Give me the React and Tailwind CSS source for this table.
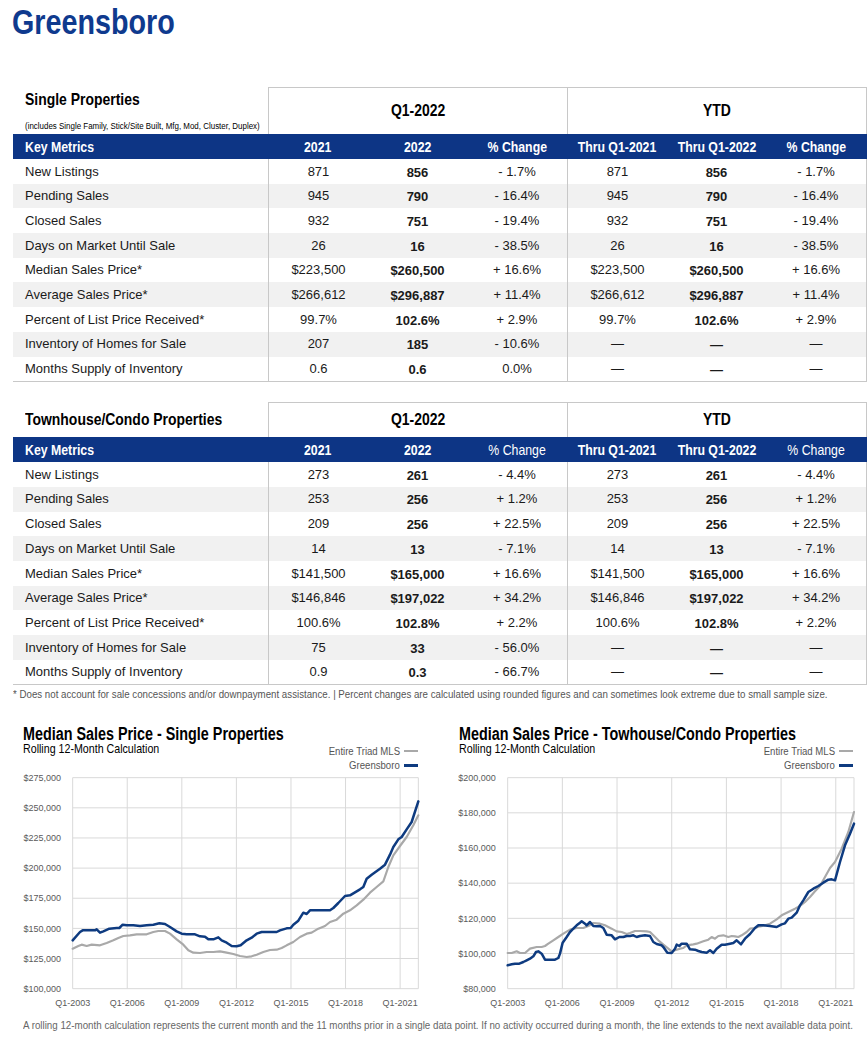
import React from 'react';

const SANS = "font-['Liberation_Sans',Arial,sans-serif]";

// condensed look: Liberation Sans squeezed horizontally
function Nar({ children, origin = 'origin-left', className = '' }) {
  return (
    <span className={`inline-block whitespace-nowrap scale-x-[0.82] ${origin} ${className}`}>{children}</span>
  );
}

const singleRows = [
  ['New Listings', '871', '856', '- 1.7%', '871', '856', '- 1.7%'],
  ['Pending Sales', '945', '790', '- 16.4%', '945', '790', '- 16.4%'],
  ['Closed Sales', '932', '751', '- 19.4%', '932', '751', '- 19.4%'],
  ['Days on Market Until Sale', '26', '16', '- 38.5%', '26', '16', '- 38.5%'],
  ['Median Sales Price*', '$223,500', '$260,500', '+ 16.6%', '$223,500', '$260,500', '+ 16.6%'],
  ['Average Sales Price*', '$266,612', '$296,887', '+ 11.4%', '$266,612', '$296,887', '+ 11.4%'],
  ['Percent of List Price Received*', '99.7%', '102.6%', '+ 2.9%', '99.7%', '102.6%', '+ 2.9%'],
  ['Inventory of Homes for Sale', '207', '185', '- 10.6%', '—', '—', '—'],
  ['Months Supply of Inventory', '0.6', '0.6', '0.0%', '—', '—', '—'],
];

const townRows = [
  ['New Listings', '273', '261', '- 4.4%', '273', '261', '- 4.4%'],
  ['Pending Sales', '253', '256', '+ 1.2%', '253', '256', '+ 1.2%'],
  ['Closed Sales', '209', '256', '+ 22.5%', '209', '256', '+ 22.5%'],
  ['Days on Market Until Sale', '14', '13', '- 7.1%', '14', '13', '- 7.1%'],
  ['Median Sales Price*', '$141,500', '$165,000', '+ 16.6%', '$141,500', '$165,000', '+ 16.6%'],
  ['Average Sales Price*', '$146,846', '$197,022', '+ 34.2%', '$146,846', '$197,022', '+ 34.2%'],
  ['Percent of List Price Received*', '100.6%', '102.8%', '+ 2.2%', '100.6%', '102.8%', '+ 2.2%'],
  ['Inventory of Homes for Sale', '75', '33', '- 56.0%', '—', '—', '—'],
  ['Months Supply of Inventory', '0.9', '0.3', '- 66.7%', '—', '—', '—'],
];

const COLS = 'grid grid-cols-[255px_100px_99px_100px_100px_99px_101px]';

function MetricsTable({ title, subtitle, topClass, rows, lightChange }) {
  const changeWeight = lightChange ? 'font-normal' : 'font-bold';
  return (
    <div className={`ml-[13px] w-[854px] ${SANS}`}>
      {/* group heading row */}
      <div className={`grid grid-cols-[255px_299px_300px] ${topClass}`}>
        <div className={`pl-[12px] flex flex-col ${subtitle ? 'justify-between pt-[3px] pb-[3px]' : 'justify-center'}`}>
          <div className="font-bold text-[17px] leading-[20px] text-black">
            <Nar>{title}</Nar>
          </div>
          {subtitle && (
            <div className="text-[9.7px] leading-[10px] text-black">
              <Nar>{subtitle}</Nar>
            </div>
          )}
        </div>
        <div className="border-l border-t border-[#c8c8c8] flex items-center justify-center font-bold text-[17px] text-black">
          <Nar origin="origin-center">Q1-2022</Nar>
        </div>
        <div className="border-l border-t border-r border-[#c8c8c8] flex items-center justify-center font-bold text-[17px] text-black">
          <Nar origin="origin-center">YTD</Nar>
        </div>
      </div>

      {/* blue header */}
      <div className={`${COLS} h-[25px] bg-[#0d3585] text-white text-[15px] leading-[18px] items-center`}>
        <div className="pl-[12px] font-bold"><Nar>Key Metrics</Nar></div>
        <div className="text-center font-bold"><Nar origin="origin-center">2021</Nar></div>
        <div className="text-center font-bold"><Nar origin="origin-center">2022</Nar></div>
        <div className={`text-center ${changeWeight}`}><Nar origin="origin-center">% Change</Nar></div>
        <div className="text-center font-bold"><Nar origin="origin-center">Thru Q1-2021</Nar></div>
        <div className="text-center font-bold"><Nar origin="origin-center">Thru Q1-2022</Nar></div>
        <div className={`text-center ${changeWeight}`}><Nar origin="origin-center">% Change</Nar></div>
      </div>

      {/* body */}
      <div className="border-b border-[#c8c8c8] text-[13px] text-[#1a1a1a]">
        {rows.map((r, i) => (
          <div key={i} className={`${COLS} h-[24.7px] items-stretch ${i % 2 === 1 ? 'bg-[#f1f1f1]' : 'bg-white'}`}>
            <div className="pl-[12px] flex items-center">{r[0]}</div>
            <div className="border-l border-[#c8c8c8] flex items-center justify-center">{r[1]}</div>
            <div className="flex items-center justify-center font-bold pt-[2px]">{r[2]}</div>
            <div className="flex items-center justify-center">{r[3]}</div>
            <div className="border-l border-[#c8c8c8] flex items-center justify-center">{r[4]}</div>
            <div className="flex items-center justify-center font-bold pt-[2px]">{r[5]}</div>
            <div className="border-r border-[#c8c8c8] flex items-center justify-center">{r[6]}</div>
          </div>
        ))}
      </div>
    </div>
  );
}

// traced lines, in 3x crop coordinates (see transform)
const singleGray =
  '218,380 235,372 245,368 260,372 275,368 300,370 320,363 340,355 355,348 370,342 390,340 410,337 440,337 460,330 475,327 495,327 510,335 530,352 550,368 565,385 580,392 600,393 620,390 640,390 660,388 680,392 700,396 720,402 740,405 755,403 770,398 790,390 810,384 830,383 845,378 860,370 880,360 900,345 920,335 935,332 955,320 975,312 990,300 1010,293 1030,275 1050,265 1070,250 1090,233 1110,212 1130,195 1150,178 1165,135 1180,100 1200,72 1220,45 1240,10 1255,-20';
const singleBlue =
  '218,355 240,330 248,325 285,325 290,322 300,332 310,328 328,320 350,318 358,318 368,308 380,310 400,310 420,312 440,310 460,308 478,304 495,306 510,315 530,328 545,335 560,337 585,337 600,343 615,344 625,352 640,352 655,346 665,355 680,362 695,372 710,373 722,370 740,355 755,347 770,335 785,330 800,330 830,330 840,325 860,319 872,318 880,308 895,296 910,272 920,276 930,265 990,265 1000,258 1015,243 1035,222 1050,220 1080,202 1090,195 1100,170 1115,158 1140,140 1155,128 1170,98 1180,75 1195,52 1205,45 1220,22 1235,0 1255,-62';
const townGray =
  '233,393 245,393 260,388 270,393 285,393 300,380 320,375 335,375 345,372 355,365 370,355 385,345 400,335 420,323 440,318 460,318 475,312 490,303 510,305 525,310 545,320 560,328 575,330 590,336 600,333 615,327 630,327 650,328 660,330 670,340 685,355 700,368 715,380 725,388 735,385 750,380 760,378 770,370 790,367 800,365 820,358 835,353 845,345 855,350 865,342 880,340 895,345 905,342 915,343 925,345 935,340 950,330 960,320 975,318 990,313 1005,310 1020,305 1040,292 1055,280 1075,270 1095,260 1110,252 1125,240 1140,225 1155,208 1170,192 1185,165 1200,138 1215,120 1235,80 1255,30 1272,-30';
const townBlue =
  '233,430 245,427 255,425 268,425 280,420 290,415 300,410 310,403 318,390 325,388 335,395 345,413 360,413 375,413 385,408 390,395 398,362 410,345 420,330 430,320 440,310 450,302 455,298 465,305 470,310 480,300 490,312 500,313 510,312 520,318 530,338 545,340 555,352 568,345 580,345 590,342 600,342 610,340 620,345 630,342 645,340 660,342 670,360 680,366 695,370 700,375 712,392 725,393 735,380 740,368 748,372 755,365 770,365 780,382 795,383 805,387 815,390 830,392 840,385 850,393 860,380 875,368 885,368 900,365 910,363 920,355 933,367 945,350 960,336 975,318 985,310 1000,310 1020,312 1040,315 1055,307 1065,304 1075,290 1085,287 1100,272 1110,250 1120,235 1135,210 1150,200 1165,192 1180,182 1195,173 1205,172 1215,175 1230,120 1245,70 1260,35 1272,5';

const XLABELS = ['Q1-2003', 'Q1-2006', 'Q1-2009', 'Q1-2012', 'Q1-2015', 'Q1-2018', 'Q1-2021'];
const AXIS_FONT = 'Liberation Sans, Arial, sans-serif';

function Chart({ left, right, yLabels, labelX, offsetX, gray, blue }) {
  const top = 5.67;
  const bottom = 216.67;
  const step = (bottom - top) / (yLabels.length - 1);
  const xStep = ((right - left) / 19) * 3;
  return (
    <svg width="433" height="242" className="block">
      {yLabels.map((l, i) => (
        <g key={l}>
          <line x1={left} x2={right} y1={top + i * step} y2={top + i * step} stroke="#d9d9d9" strokeWidth="1" />
          <text x={labelX} y={top + i * step + 3.2} textAnchor="end" fontSize="9" fill="#5a5a5a" fontFamily={AXIS_FONT}>{l}</text>
        </g>
      ))}
      {XLABELS.map((l, i) => (
        <g key={l}>
          <line x1={left + i * xStep} x2={left + i * xStep} y1={top} y2={bottom} stroke="#d9d9d9" strokeWidth="1" />
          <text x={left + i * xStep} y={234} textAnchor="middle" fontSize="9" fill="#5a5a5a" fontFamily={AXIS_FONT}>{l}</text>
        </g>
      ))}
      <line x1={right} x2={right} y1={top} y2={bottom} stroke="#d9d9d9" strokeWidth="1" />
      <g transform={`translate(${offsetX} 50) scale(0.33333)`}>
        <polyline points={gray} fill="none" stroke="#a9a9a9" strokeWidth="6.5" strokeLinejoin="round" strokeLinecap="round" />
        <polyline points={blue} fill="none" stroke="#0e3b80" strokeWidth="7.5" strokeLinejoin="round" strokeLinecap="round" />
      </g>
    </svg>
  );
}

function ChartBlock({ title, padL, padR, children }) {
  return (
    <div className={`w-[433px] ${padL} ${SANS}`}>
      <div className="font-bold text-[17.5px] leading-[18px] text-black">
        <Nar>{title}</Nar>
      </div>
      <div className={`flex justify-between items-start ${padR}`}>
        <div className="text-[13px] leading-[12px] text-black">
          <Nar>Rolling 12-Month Calculation</Nar>
        </div>
        <div className="mt-[1px] text-[11.7px] leading-[14px] text-[#555] flex flex-col items-end">
          <div className="flex items-center gap-[4px]">
            <Nar origin="origin-right">Entire Triad MLS</Nar>
            <span className="inline-block w-[14px] h-[2px] bg-[#a9a9a9]"></span>
          </div>
          <div className="flex items-center gap-[4px]">
            <Nar origin="origin-right">Greensboro</Nar>
            <span className="inline-block w-[14px] h-[2.5px] bg-[#0e3b80]"></span>
          </div>
        </div>
      </div>
      {children}
    </div>
  );
}

export default function App() {
  return (
    <div className={`w-[867px] h-[1037px] overflow-hidden bg-white ${SANS}`}>
      <div className="h-[87px] pl-[12px] pt-[2px]">
        <h1 className="font-bold text-[35px] leading-[40px] text-[#0f3a8e]">
          <Nar>Greensboro</Nar>
        </h1>
      </div>

      <MetricsTable
        title="Single Properties"
        subtitle="(includes Single Family, Stick/Site Built, Mfg, Mod, Cluster, Duplex)"
        topClass="h-[47px]"
        rows={singleRows}
      />

      <div className="mt-[20px]">
        <MetricsTable title="Townhouse/Condo Properties" topClass="h-[35px]" rows={townRows} lightChange />
      </div>

      <p className="mt-[3px] pl-[13px] text-[10.5px] leading-[12px] text-[#555]">
        <span className="inline-block whitespace-nowrap origin-left scale-x-[0.925]">
          * Does not account for sale concessions and/or downpayment assistance. | Percent changes are calculated using rounded figures and can sometimes look extreme due to small sample size.
        </span>
      </p>

      <div className="flex mt-[25px]">
        <ChartBlock title="Median Sales Price - Single Properties" padL="pl-[23px]" padR="pr-[15px]">
          <div className="-ml-[23px]">
            <Chart
              left={72.67}
              right={418.33}
              labelX={61}
              offsetX={0}
              yLabels={['$275,000', '$250,000', '$225,000', '$200,000', '$175,000', '$150,000', '$125,000', '$100,000']}
              gray={singleGray}
              blue={singleBlue}
            />
          </div>
        </ChartBlock>
        <ChartBlock title="Median Sales Price - Towhouse/Condo Properties" padL="pl-[26px]" padR="pr-[13px]">
          <div className="-ml-[26px]">
            <Chart
              left={74.67}
              right={421}
              labelX={62.7}
              offsetX={-3}
              yLabels={['$200,000', '$180,000', '$160,000', '$140,000', '$120,000', '$100,000', '$80,000']}
              gray={townGray}
              blue={townBlue}
            />
          </div>
        </ChartBlock>
      </div>

      <p className="mt-[6px] pl-[23px] text-[10px] leading-[12px] text-[#666]">
        <span className="inline-block whitespace-nowrap origin-left scale-x-[0.976]">
          A rolling 12-month calculation represents the current month and the 11 months prior in a single data point. If no activity occurred during a month, the line extends to the next available data point.
        </span>
      </p>
    </div>
  );
}
